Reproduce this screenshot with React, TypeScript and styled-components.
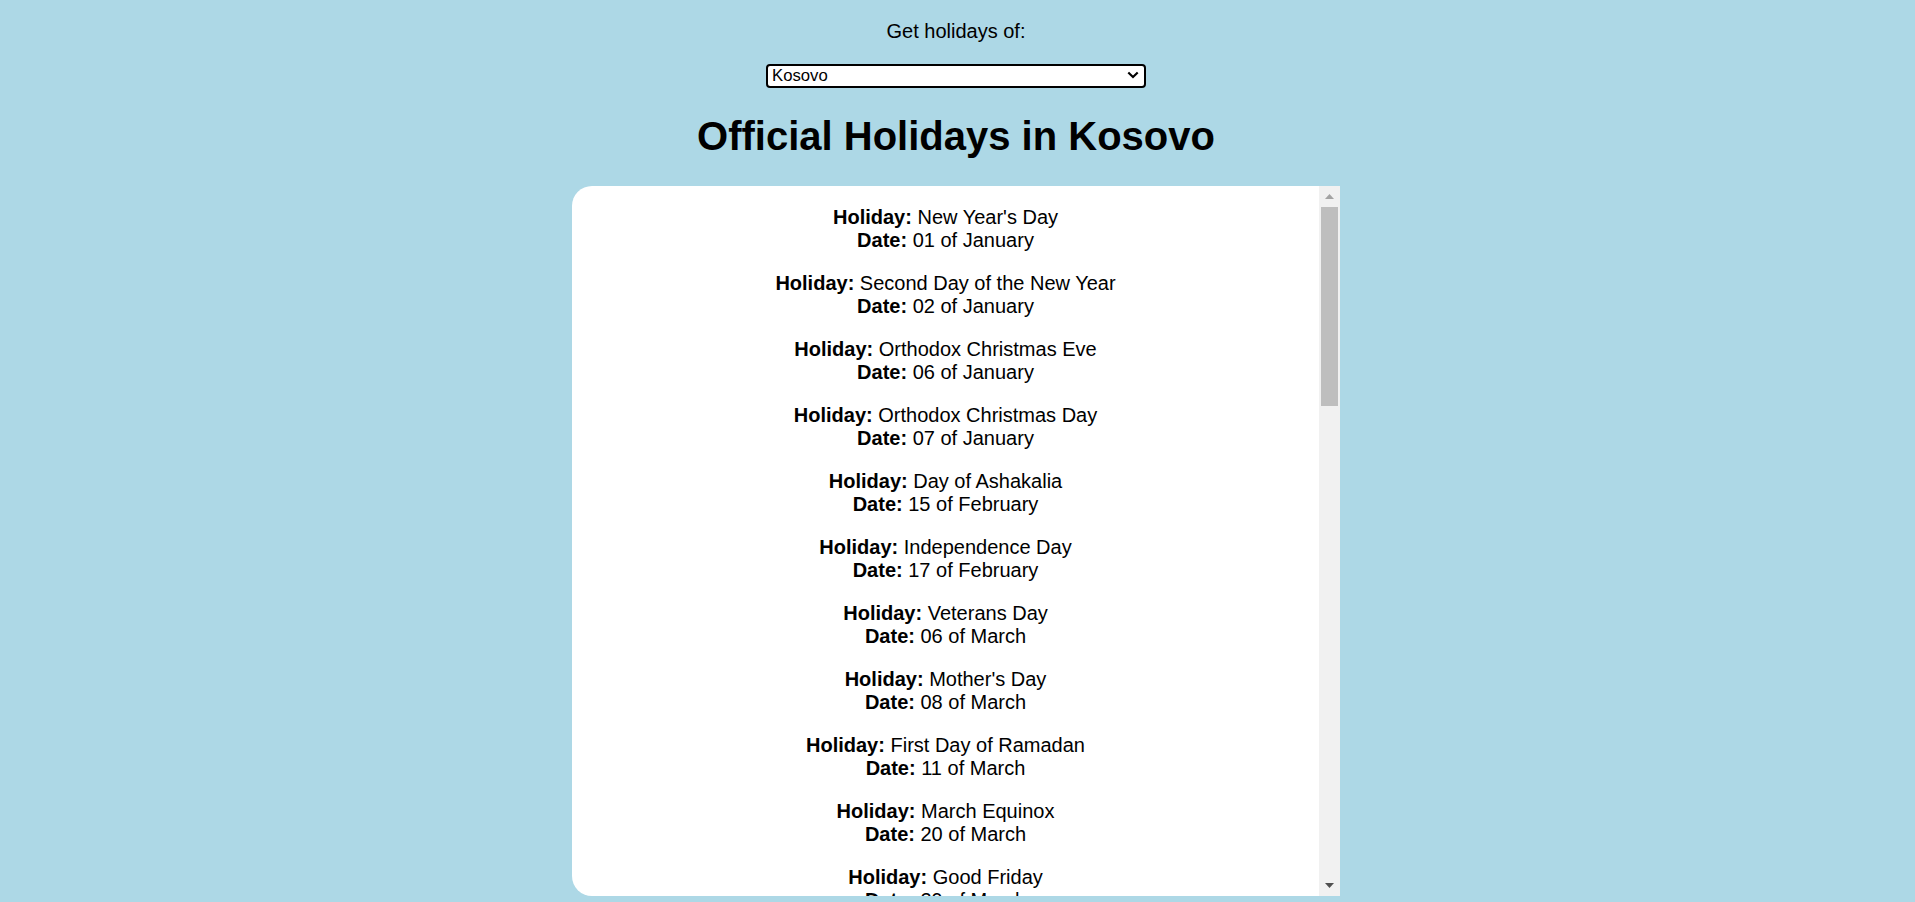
import React, { useState } from "react";
import styled, { createGlobalStyle } from "styled-components";

const GlobalStyle = createGlobalStyle`
  html, body {
    margin: 0;
    padding: 0;
    background: #add8e6;
    overflow: hidden;
  }
  body {
    font-family: "Liberation Sans", Arial, sans-serif;
    font-size: 20px;
    color: #000;
  }
`;

const Page = styled.div`
  display: flex;
  flex-direction: column;
  align-items: center;
  padding: 20px 3px 0 0;
`;

const Label = styled.label`
  display: block;
  font-size: 20px;
  line-height: 23px;
  margin: 0 0 20px;
`;

const SelectWrap = styled.div`
  position: relative;
  width: 380px;
  height: 24px;
`;

const Select = styled.select`
  appearance: none;
  -webkit-appearance: none;
  box-sizing: border-box;
  width: 100%;
  height: 100%;
  margin: 0;
  padding: 0 20px 0 4px;
  border: 2px solid #000;
  border-radius: 4px;
  background: #fff;
  color: #000;
  font-family: "Liberation Sans", Arial, sans-serif;
  font-size: 16.7px;
  line-height: 20px;
  outline: none;
`;

const Chevron = styled.svg`
  position: absolute;
  right: 7px;
  top: 8px;
  width: 12px;
  height: 8px;
  pointer-events: none;
`;

const Title = styled.h1`
  font-size: 40px;
  line-height: 46px;
  font-weight: bold;
  margin: 26px 0 27px;
`;

const Panel = styled.div`
  display: flex;
  width: 768px;
  height: 710px;
  background: #fff;
  border-radius: 20px 0 0 20px;
  overflow: hidden;
`;

const Scroller = styled.div`
  flex: 1;
  overflow: hidden;
  text-align: center;
`;

const ScrollTrack = styled.div`
  display: flex;
  flex-direction: column;
  width: 21px;
  flex: none;
  background: #f1f1f1;
`;

const ScrollButton = styled.div`
  display: flex;
  align-items: center;
  justify-content: center;
  height: 21px;
  flex: none;
`;

const Thumb = styled.div`
  height: 199px;
  margin: 0 2px;
  background: #bebebe;
  flex: none;
`;

const TrackRest = styled.div`
  flex: 1;
`;

const Item = styled.p`
  margin: 20px 0 20px;
  line-height: 23px;
  font-size: 20px;
`;

const Key = styled.b`
  font-weight: bold;
`;

type Holiday = { name: string; date: string };

const holidays: Holiday[] = [
  { name: "New Year's Day", date: "01 of January" },
  { name: "Second Day of the New Year", date: "02 of January" },
  { name: "Orthodox Christmas Eve", date: "06 of January" },
  { name: "Orthodox Christmas Day", date: "07 of January" },
  { name: "Day of Ashakalia", date: "15 of February" },
  { name: "Independence Day", date: "17 of February" },
  { name: "Veterans Day", date: "06 of March" },
  { name: "Mother's Day", date: "08 of March" },
  { name: "First Day of Ramadan", date: "11 of March" },
  { name: "March Equinox", date: "20 of March" },
  { name: "Good Friday", date: "29 of March" },
  { name: "Catholic Easter Sunday", date: "31 of March" },
  { name: "Catholic Easter Monday", date: "01 of April" },
  { name: "Day of the Roma", date: "08 of April" },
  { name: "Constitution Day", date: "09 of April" },
  { name: "Eid al-Fitr", date: "10 of April" },
  { name: "Day of the Turks", date: "23 of April" },
  { name: "International Workers' Day", date: "01 of May" },
  { name: "Orthodox Good Friday", date: "03 of May" },
  { name: "Orthodox Easter Sunday", date: "05 of May" },
  { name: "Orthodox Easter Monday", date: "06 of May" },
  { name: "Europe Day", date: "09 of May" },
  { name: "Kosovo Peace Day", date: "12 of June" },
  { name: "Eid al-Adha", date: "16 of June" },
  { name: "June Solstice", date: "20 of June" },
  { name: "Vidovdan", date: "28 of June" },
  { name: "Islamic New Year", date: "07 of July" },
  { name: "Ashura", date: "16 of July" },
  { name: "September Equinox", date: "22 of September" },
  { name: "Day of Bosniaks", date: "28 of September" },
  { name: "Mother Teresa Day", date: "19 of October" },
  { name: "Albanian Flag Day", date: "28 of November" },
  { name: "December Solstice", date: "21 of December" },
  { name: "Christmas Eve", date: "24 of December" },
  { name: "Christmas Day", date: "25 of December" },
  { name: "New Year's Eve", date: "31 of December" },
];

export default function App() {
  const [country, setCountry] = useState("XK");
  const countryName = "Kosovo";
  return (
    <>
      <GlobalStyle />
      <Page>
        <Label htmlFor="country">Get holidays of:</Label>
        <SelectWrap>
          <Select
            id="country"
            value={country}
            onChange={(e) => setCountry(e.target.value)}
          >
            <option value="AL">Albania</option>
            <option value="XK">Kosovo</option>
            <option value="MK">North Macedonia</option>
          </Select>
          <Chevron viewBox="0 0 12 8">
            <path
              d="M1.3 1.5 L6 6 L10.7 1.5"
              fill="none"
              stroke="#000"
              strokeWidth="2.2"
            />
          </Chevron>
        </SelectWrap>
        <Title>Official Holidays in {countryName}</Title>
        <Panel>
          <Scroller>
            {holidays.map((h) => (
              <Item key={h.name + h.date}>
                <Key>Holiday:</Key> {h.name}
                <br />
                <Key>Date:</Key> {h.date}
              </Item>
            ))}
          </Scroller>
          <ScrollTrack>
            <ScrollButton>
              <svg width="9" height="5" viewBox="0 0 9 5">
                <path d="M0 5 L4.5 0 L9 5 Z" fill="#a3a3a3" />
              </svg>
            </ScrollButton>
            <Thumb />
            <TrackRest />
            <ScrollButton>
              <svg width="9" height="5" viewBox="0 0 9 5">
                <path d="M0 0 L9 0 L4.5 5 Z" fill="#505050" />
              </svg>
            </ScrollButton>
          </ScrollTrack>
        </Panel>
      </Page>
    </>
  );
}
